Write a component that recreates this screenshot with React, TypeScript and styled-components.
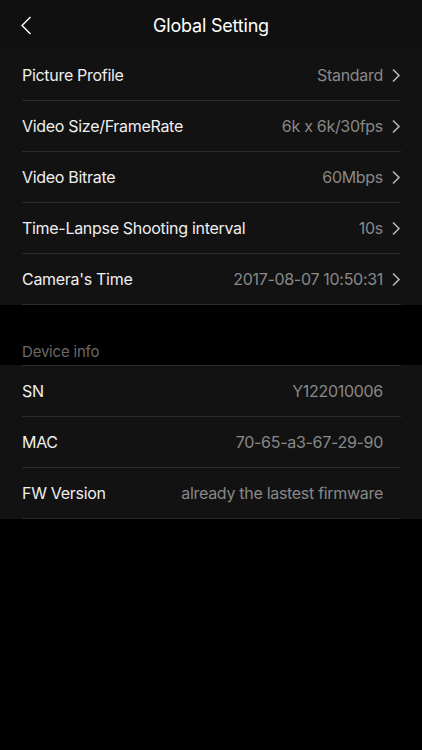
import React from 'react'
import styled, { createGlobalStyle } from 'styled-components'

const GlobalStyle = createGlobalStyle`
  html, body {
    margin: 0;
    padding: 0;
    background: #000;
  }
  body {
    font-family: Inter, "Liberation Sans", Arial, sans-serif;
    -webkit-font-smoothing: antialiased;
  }
`

const Screen = styled.div`
  width: 422px;
  min-height: 750px;
  background: #000;
  color: #fff;
`

const NavBar = styled.div`
  height: 50px;
  background: #101010;
  display: flex;
  align-items: center;
  justify-content: center;
  position: relative;
`

const BackButton = styled.button`
  position: absolute;
  left: 14px;
  top: 12px;
  width: 24px;
  height: 26px;
  padding: 0;
  border: 0;
  background: transparent;
  display: flex;
  align-items: center;
  justify-content: center;
`

const Title = styled.h1`
  margin: 0;
  font-size: 18px;
  font-weight: 400;
  color: #fff;
  letter-spacing: -0.2px;
`

const Section = styled.div<{ topLine?: boolean }>`
  background: #121212;
  border-top: ${({ topLine }) => (topLine ? '1px solid transparent' : '0')};
  position: relative;
  ${({ topLine }) =>
    topLine &&
    `
    &::before {
      content: '';
      position: absolute;
      top: -1px;
      left: 22px;
      right: 21px;
      height: 1px;
      background: #2a2a2a;
    }
  `}
`

const Row = styled.div`
  height: 50px;
  margin-left: 22px;
  margin-right: 21px;
  border-bottom: 1px solid #2a2a2a;
  display: flex;
  align-items: center;
  justify-content: space-between;
`

const Label = styled.span`
  font-size: 16px;
  color: #efefef;
  letter-spacing: -0.3px;
`

const Value = styled.span`
  display: flex;
  align-items: center;
  font-size: 16px;
  color: #888;
  letter-spacing: -0.3px;
`

const ChevronSlot = styled.span`
  width: 18px;
  display: flex;
  justify-content: flex-end;
  align-items: center;
`

const SectionHeader = styled.div`
  height: 60px;
  box-sizing: border-box;
  padding: 0 22px 4px;
  display: flex;
  align-items: flex-end;
  font-size: 15px;
  color: #6a6a6a;
  letter-spacing: -0.2px;
`

const Chevron = () => (
  <svg width="10" height="15" viewBox="0 0 10 15">
    <path d="M2 1.5 L8 7.5 L2 13.5" fill="none" stroke="#b5b5b5" strokeWidth="1.6" />
  </svg>
)

const BackIcon = () => (
  <svg width="12" height="19" viewBox="0 0 12 19">
    <path d="M10.5 1 L2 9.5 L10.5 18" fill="none" stroke="#fff" strokeWidth="1.4" />
  </svg>
)

const settings = [
  { label: 'Picture Profile', value: 'Standard' },
  { label: 'Video Size/FrameRate', value: '6k x 6k/30fps' },
  { label: 'Video Bitrate', value: '60Mbps' },
  { label: 'Time-Lanpse Shooting interval', value: '10s' },
  { label: "Camera's Time", value: '2017-08-07 10:50:31' },
]

const deviceInfo = [
  { label: 'SN', value: 'Y122010006' },
  { label: 'MAC', value: '70-65-a3-67-29-90' },
  { label: 'FW Version', value: 'already the lastest firmware' },
]

export default function App() {
  return (
    <Screen>
      <GlobalStyle />
      <NavBar>
        <BackButton aria-label="Back">
          <BackIcon />
        </BackButton>
        <Title>Global Setting</Title>
      </NavBar>

      <Section>
        {settings.map((s) => (
          <Row key={s.label}>
            <Label>{s.label}</Label>
            <Value>
              {s.value}
              <ChevronSlot>
                <Chevron />
              </ChevronSlot>
            </Value>
          </Row>
        ))}
      </Section>

      <SectionHeader>Device info</SectionHeader>

      <Section topLine>
        {deviceInfo.map((d) => (
          <Row key={d.label}>
            <Label>{d.label}</Label>
            <Value>
              {d.value}
              <ChevronSlot />
            </Value>
          </Row>
        ))}
      </Section>
    </Screen>
  )
}
